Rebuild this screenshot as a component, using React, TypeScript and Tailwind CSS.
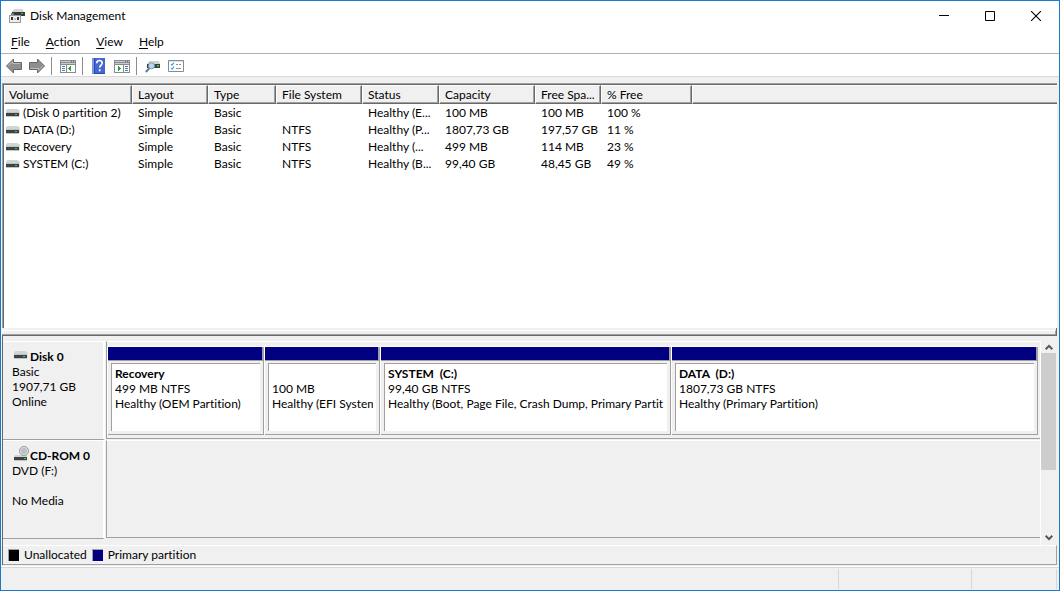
import React from "react";

const volumes = [
  { name: "(Disk 0 partition 2)", fs: "", status: "Healthy (E...", capacity: "100 MB", free: "100 MB", pct: "100 %" },
  { name: "DATA (D:)", fs: "NTFS", status: "Healthy (P...", capacity: "1807,73 GB", free: "197,57 GB", pct: "11 %" },
  { name: "Recovery", fs: "NTFS", status: "Healthy (...", capacity: "499 MB", free: "114 MB", pct: "23 %" },
  { name: "SYSTEM (C:)", fs: "NTFS", status: "Healthy (B...", capacity: "99,40 GB", free: "48,45 GB", pct: "49 %" },
];

const partitions = [
  { title: "Recovery", size: "499 MB NTFS", status: "Healthy (OEM Partition)" },
  { title: "", size: "100 MB", status: "Healthy (EFI System" },
  { title: "SYSTEM  (C:)", size: "99,40 GB NTFS", status: "Healthy (Boot, Page File, Crash Dump, Primary Partit" },
  { title: "DATA  (D:)", size: "1807,73 GB NTFS", status: "Healthy (Primary Partition)" },
];

const columns = ["Volume", "Layout", "Type", "File System", "Status", "Capacity", "Free Spa...", "% Free"];

function DriveIcon() {
  return (
    <svg width="14" height="8" viewBox="0 0 14 8" shapeRendering="crispEdges" aria-hidden="true">
      <path d="M1 0h11v1h1v2H0V1h1z" fill="#d2d5d8" />
      <path d="M0 3h13v1H0z" fill="#bfc3c6" />
      <path d="M0 4h13v3H0z" fill="#3f4245" />
      <path d="M0 7h13v1H0z" fill="#c4c4c4" />
      <path d="M9 5h2v1H9z" fill="#1fe03a" />
      <path d="M13 1h1v6h-1z" fill="#dfe1e3" />
    </svg>
  );
}

function CdIcon() {
  return (
    <svg width="15" height="16" viewBox="0 0 15 16" aria-hidden="true">
      <path d="M1 9h12v2H0z" fill="#cfd2d4" />
      <circle cx="10" cy="5" r="4.6" fill="#d5d8da" stroke="#909498" strokeWidth="0.8" />
      <circle cx="10" cy="5" r="2.6" fill="none" stroke="#b2b6ba" strokeWidth="0.8" />
      <circle cx="10" cy="5" r="1.2" fill="#fff" stroke="#858a8e" strokeWidth="0.7" />
      <path d="M0 11h13v3H0z" fill="#3f4245" />
      <path d="M0 14h13v1H0z" fill="#c4c4c4" />
      <path d="M10 12h2v1h-2z" fill="#1fe03a" />
    </svg>
  );
}

function AppIcon() {
  return (
    <svg width="16" height="16" viewBox="0 0 16 16" shapeRendering="crispEdges" aria-hidden="true">
      <path d="M5 1h9l1 3H3z" fill="#d3d6d8" />
      <path d="M3 4h13v4H3z" fill="#37393b" />
      <path d="M12 5h2v1h-2z" fill="#1fe03a" />
      <path d="M2 5h3v2H2z" fill="#777b7e" />
      <path d="M0 7h12v8H0z" fill="#9b9b9b" />
      <path d="M1 8h10v6H1z" fill="#ececec" />
      <path d="M2 9h2v3H2zM8 9h2v3H8z" fill="#353535" />
      <path d="M5 10h2v2H5z" fill="#c2c2c2" />
    </svg>
  );
}

function Arrow({ forward = false }: { forward?: boolean }) {
  return (
    <svg width="16" height="16" viewBox="0 0 16 16" className={forward ? "rotate-180" : ""} aria-hidden="true">
      <path d="M.5 8 7.500 1v3.500h8v7h-8V15z" fill="#8f8f8f" stroke="#666" strokeWidth="1" strokeLinejoin="round" />
      <path d="M2.200 8 6.500 3.700v1.800h8" fill="none" stroke="#bcbcbc" strokeWidth="1" />
    </svg>
  );
}

function PaneIcon({ action = false }: { action?: boolean }) {
  return (
    <svg width="16" height="16" viewBox="0 0 16 16" shapeRendering="crispEdges" aria-hidden="true">
      <path d="M0 2h16v13H0z" fill="#858b91" />
      <path d="M1 3h14v1H1z" fill="#c8ccd0" />
      <path d="M11 3h1v1h-1zM13 3h1v1h-1z" fill="#656b72" />
      <path d="M1 5h14v1H1z" fill="#c8ccd0" />
      <path d="M1 7h14v7H1z" fill="#fff" />
      {action ? (
        <>
          <path d="M9 6h1v8H9z" fill="#858b91" />
          <path d="M11 8h3v1h-3zM11 10h3v1h-3zM11 12h3v1h-3z" fill="#4e7b9f" />
          <path d="M4 8h1v1h1v1h1v1H6v1H5v1H4z" fill="#2fa52b" />
        </>
      ) : (
        <>
          <path d="M6 6h1v8H6z" fill="#858b91" />
          <path d="M2 8h3v1H2zM2 10h3v1H2zM2 12h3v1H2z" fill="#4e7b9f" />
          <path d="M11 8h-1v1H9v1H8v1h1v1h1v1h1z" fill="#2fa52b" />
        </>
      )}
    </svg>
  );
}

function HelpIcon() {
  return (
    <svg width="16" height="16" viewBox="0 0 16 16" aria-hidden="true">
      <path d="M1 0h13v16H1z" fill="#2b4aa8" />
      <path d="M4 0h10v15H4z" fill="#4468d2" />
      <path d="M1 0h2v16H1z" fill="#7c97df" />
      <path d="M5.700 5.200C5.700 1.600 11.400 1.700 11.200 5c0 2-2.500 2.100-2.500 4.600M8.700 11.300v2" fill="none" stroke="#fff" strokeWidth="1.700" />
    </svg>
  );
}

function RescanIcon() {
  return (
    <svg width="16" height="16" viewBox="0 0 16 16" aria-hidden="true">
      <path d="M4 3h10l1 3H2z" fill="#d0d3d6" />
      <path d="M2 6h13v4H2z" fill="#3b3e40" />
      <path d="M12 7h2v1.500h-2z" fill="#23dd3c" />
      <path d="M4.800 9.800.8 14" stroke="#5e7f9c" strokeWidth="2" />
      <circle cx="6.500" cy="7.800" r="3" fill="#b9d9ea" stroke="#7d9cb3" strokeWidth="1" />
    </svg>
  );
}

function ChecklistIcon() {
  return (
    <svg width="16" height="16" viewBox="0 0 16 16" aria-hidden="true">
      <path d="M.5 2.500h15v11H.5z" fill="#fff" stroke="#858a90" />
      <path d="M1 3h14v1H1z" fill="#e0e3e6" />
      <path d="m3 6 1 1.200L6 4.700M3 10l1 1.200L6 8.700" fill="none" stroke="#3b9be8" strokeWidth="1.100" />
      <path d="M8 6.500h2M11 6.500h2M8 10.500h5" stroke="#8b9299" />
    </svg>
  );
}

function ToolButton({ label, children }: { label: string; children: React.ReactNode }) {
  return (
    <button type="button" aria-label={label} className="flex h-full items-center pl-1 pr-[3px]">
      {children}
    </button>
  );
}

function ToolSeparator() {
  return <div className="ml-[3px] mr-1 h-[18px] w-px bg-[#8d8d8d]" />;
}

function Chevron({ down = false }: { down?: boolean }) {
  return (
    <svg width="8" height="7" viewBox="0 0 8 7" className={down ? "rotate-180" : ""} aria-hidden="true">
      <path d="M.7 5.200 4 1.900l3.300 3.300" fill="none" stroke="#555" strokeWidth="2" />
    </svg>
  );
}

function DiskLabel({ icon, name, lines }: { icon: React.ReactNode; name: string; lines: string[] }) {
  return (
    <div className="w-[102px] shrink-0 border-r-2 border-b border-t border-r-white border-b-[#a0a0a0] border-t-white pl-[9px] pt-[7px] leading-[15px]">
      <div className="flex h-[15px] items-center font-bold">
        <span className="ml-0.5 flex w-4 shrink-0 items-center pb-1">{icon}</span>
        <span className="whitespace-nowrap">{name}</span>
      </div>
      {lines.map((line, i) => (
        <div key={i} className="h-[15px]">{line}</div>
      ))}
    </div>
  );
}

export default function App() {
  return (
    <div className="flex h-screen min-h-[480px] flex-col overflow-hidden border border-[#1979ca] bg-[#f0f0f0] font-[Lato,'Noto_Sans',sans-serif] text-[12px] text-black [font-variant-ligatures:none]">
      <header className="flex h-[30px] shrink-0 items-center bg-white pl-2">
        <AppIcon />
        <h1 className="ml-[5px] flex-1 whitespace-nowrap">Disk Management</h1>
        <button type="button" aria-label="Minimize" className="flex h-full w-[46px] items-center justify-center">
          <svg width="10" height="10" viewBox="0 0 10 10" shapeRendering="crispEdges" aria-hidden="true"><path d="M0 4h10v1H0z" /></svg>
        </button>
        <button type="button" aria-label="Maximize" className="flex h-full w-[46px] items-center justify-center">
          <svg width="10" height="10" viewBox="0 0 10 10" aria-hidden="true"><path d="M.5.5h9v9h-9z" fill="none" stroke="#000" /></svg>
        </button>
        <button type="button" aria-label="Close" className="flex h-full w-[46px] items-center justify-center">
          <svg width="10" height="10" viewBox="0 0 10 10" aria-hidden="true"><path d="m0 0 10 10M10 0 0 10" stroke="#000" strokeWidth="1.100" /></svg>
        </button>
      </header>

      <nav className="flex h-[22px] shrink-0 items-center bg-white pl-0.5">
        {["File", "Action", "View", "Help"].map((item) => (
          <button key={item} type="button" className="px-2">
            <span className="underline underline-offset-2">{item[0]}</span>
            {item.slice(1)}
          </button>
        ))}
      </nav>

      <div role="toolbar" className="flex h-6 shrink-0 items-center border-b border-t border-b-[#d9d9d9] border-t-[#acb0ba] bg-white pl-px pt-px">
        <ToolButton label="Back"><Arrow /></ToolButton>
        <ToolButton label="Forward"><Arrow forward /></ToolButton>
        <ToolSeparator />
        <ToolButton label="Show console tree"><PaneIcon /></ToolButton>
        <ToolSeparator />
        <ToolButton label="Help topics"><HelpIcon /></ToolButton>
        <ToolButton label="Show action pane"><PaneIcon action /></ToolButton>
        <ToolSeparator />
        <ToolButton label="Rescan disks"><RescanIcon /></ToolButton>
        <ToolButton label="Properties"><ChecklistIcon /></ToolButton>
      </div>

      <main className="mt-1.5 flex min-h-0 flex-1 flex-col pl-px pr-0.5">
        <section className="min-h-0 flex-1 overflow-hidden border-l border-t border-[#a0a0a0]">
          <div className="h-full border-l border-t border-[#696969] bg-white">
            <table className="w-full table-fixed border-separate border-spacing-0">
              <colgroup>
                <col className="w-[128px]" />
                <col className="w-[76px]" />
                <col className="w-[68px]" />
                <col className="w-[86px]" />
                <col className="w-[77px]" />
                <col className="w-[96px]" />
                <col className="w-[66px]" />
                <col className="w-[91px]" />
                <col />
              </colgroup>
              <thead>
                <tr>
                  {columns.map((c) => (
                    <th key={c} scope="col" className="h-[19px] overflow-hidden whitespace-nowrap border border-b-[#696969] border-l-white border-r-[#696969] border-t-white bg-[#f0f0f0] p-0 pl-[5px] text-left font-normal leading-[17px] shadow-[inset_-1px_-1px_0_#a0a0a0] first:pl-1">
                      {c}
                    </th>
                  ))}
                  <td className="h-[19px] border border-r-0 border-b-[#696969] border-l-white border-t-white bg-[#f0f0f0] p-0 shadow-[inset_0_-1px_0_#a0a0a0]" />
                </tr>
              </thead>
              <tbody className="leading-[17px]">
                {volumes.map((v) => (
                  <tr key={v.name} className="h-[17px] whitespace-nowrap">
                    <td className="p-0 pl-0.5">
                      <span className="flex items-center gap-[3px]">
                        <DriveIcon />
                        {v.name}
                      </span>
                    </td>
                    <td className="p-0 pl-1.5">Simple</td>
                    <td className="p-0 pl-1.5">Basic</td>
                    <td className="p-0 pl-1.5">{v.fs}</td>
                    <td className="p-0 pl-1.5">{v.status}</td>
                    <td className="p-0 pl-1.5">{v.capacity}</td>
                    <td className="p-0 pl-1.5">{v.free}</td>
                    <td className="p-0 pl-1.5">{v.pct}</td>
                    <td className="p-0" />
                  </tr>
                ))}
              </tbody>
            </table>
          </div>
        </section>

        <div className="h-2 shrink-0 border-b border-r border-[#696969] pt-0.5">
          <div className="h-[5px] border-b border-r border-t border-b-[#a0a0a0] border-r-[#a0a0a0] border-t-white" />
        </div>

        <section className="shrink-0 border-l border-[#696969] pt-[5px]">
          <div className="flex">
            <div className="min-w-0 flex-1">
              <div className="flex h-[99px]">
                <DiskLabel icon={<DriveIcon />} name="Disk 0" lines={["Basic", "1907,71 GB", "Online"]} />
                <div className="mb-px ml-px flex-1 border-b border-l border-t border-[#a0a0a0] border-t-white pb-[3px] pr-0.5 pt-1">
                  <div className="grid h-full grid-cols-[157fr_116fr_291fr_366fr] border-l border-t border-white">
                    {partitions.map((p) => (
                      <div key={p.status} className="min-w-0 border-r border-white last:border-r-0">
                        <div className="flex h-full flex-col border-b border-r border-[#a0a0a0]">
                          <div className="h-3.5 shrink-0 border-b border-r border-[#a0a0a0] bg-[#000080]" />
                          <div className="mx-[3px] mb-[3px] mt-0.5 flex-1 overflow-hidden border-l border-t border-[#a0a0a0] bg-white px-[3px] pt-0.5 leading-[15px]">
                            <div className="overflow-hidden whitespace-pre">
                              <div className="h-[15px] font-bold">{p.title}</div>
                              <div className="h-[15px]">{p.size}</div>
                              <div className="h-[15px]">{p.status}</div>
                            </div>
                          </div>
                        </div>
                      </div>
                    ))}
                  </div>
                </div>
              </div>
              <div className="flex h-[99px]">
                <DiskLabel icon={<CdIcon />} name="CD-ROM 0" lines={["DVD (F:)", "", "No Media"]} />
                <div className="mb-px ml-px flex-1 border-b border-l border-t border-[#a0a0a0] border-t-white" />
              </div>
              <div className="h-[6px]" />
            </div>
            <div className="flex w-[17px] shrink-0 flex-col border-l border-white">
              <button type="button" aria-label="Scroll up" className="flex h-3 items-center justify-center"><Chevron /></button>
              <div className="h-[117px] w-[15px] bg-[#cdcdcd]" />
              <div className="flex-1" />
              <button type="button" aria-label="Scroll down" className="flex h-4 items-center justify-center"><Chevron down /></button>
            </div>
          </div>

          <div className="flex h-5 items-center border-b border-r border-t border-b-[#a0a0a0] border-r-[#a0a0a0] border-t-white pl-[5px]">
            <span className="h-3 w-[11px] border-l border-t border-[#a0a0a0] bg-black" />
            <span className="ml-[5px]">Unallocated</span>
            <span className="ml-[5px] h-3 w-[11px] border-l border-t border-[#a0a0a0] bg-[#000080]" />
            <span className="ml-[5px]">Primary partition</span>
          </div>
        </section>
      </main>

      <footer className="mt-0.5 flex h-[23px] shrink-0 border-t border-[#d7d7d7] pb-px pr-0.5 pt-px shadow-[0_-1px_0_#fff]">
        <div className="flex-1 border-r border-[#d7d7d7]" />
        <div className="w-[133px] border-r border-[#d7d7d7]" />
        <div className="w-[85px] border-r border-[#d7d7d7]" />
      </footer>
    </div>
  );
}
